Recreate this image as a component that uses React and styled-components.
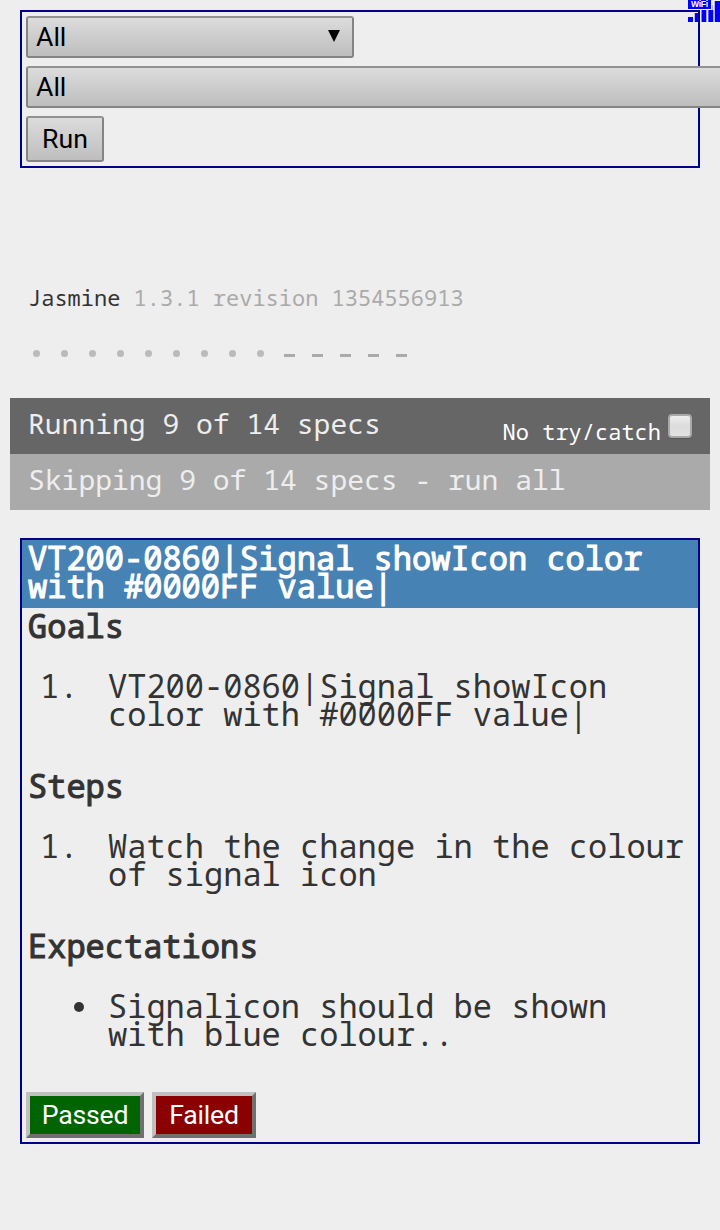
import React from 'react';
import styled, { createGlobalStyle, css } from 'styled-components';

const Global = createGlobalStyle`
  * { box-sizing: border-box; }
  html, body { margin: 0; background: #eee; overflow: hidden; }
  body { min-height: 1230px; color: #333; font-family: "Noto Sans Mono", "DejaVu Sans Mono", monospace; }
`;

const Page = styled.main`
  display: flex;
  flex-direction: column;
  width: 720px;
  height: 1230px;
  padding: 10px;
  overflow: hidden;
`;

const Panel = styled.section`
  display: flex;
  flex-direction: column;
  margin: 0 10px;
  border: 2px solid #00008b;
`;

const FilterPanel = styled(Panel)`
  height: 158px;
  padding: 4px;
  gap: 8px;
  align-items: flex-start;
`;

const grey = css`
  border: 2px solid #848484;
  border-top-color: #929292;
  border-radius: 3px;
  background: linear-gradient(#dcdcdc, #bebebe);
  color: #000;
  font-family: Roboto, sans-serif;
  font-size: 26.67px;
`;

const Select = styled.div`
  ${grey}
  display: flex;
  flex: none;
  align-items: center;
  justify-content: space-between;
  width: ${(p) => p.$width}px;
  height: 42px;
  padding: 0 12px 0 8px;
  line-height: 38px;
`;

const Arrow = styled.svg`
  margin-bottom: 2px;
`;

const RunButton = styled.button`
  ${grey}
  width: 78px;
  height: 46px;
  padding: 0;
  line-height: 42px;
`;

const Version = styled.div`
  margin: 115px 18px 0;
  height: 28px;
  line-height: 28px;
  font-size: 22px;
  color: #aaa;
  white-space: pre;
`;

const Name = styled.span`
  color: #333;
`;

const Symbols = styled.ul`
  display: flex;
  height: 14px;
  margin: 35px 18px 38px;
  padding: 0 0 0 4px;
  list-style: none;
`;

const Symbol = styled.li`
  display: flex;
  width: 28px;
  height: 14px;
  align-items: center;

  &::before {
    content: "";
    width: ${(p) => (p.$skipped ? 11 : 7)}px;
    height: ${(p) => (p.$skipped ? 3 : 7)}px;
    margin: ${(p) => (p.$skipped ? '4px 0 0 0' : '0 0 0 1px')};
    border-radius: ${(p) => (p.$skipped ? 0 : '50%')};
    background: ${(p) => (p.$skipped ? '#aaa' : '#bababa')};
  }
`;

const Bar = styled.div`
  display: flex;
  justify-content: space-between;
  height: 56px;
  padding: 0 18px;
  background: ${(p) => p.$color};
  color: #eee;
  font-size: 28px;
  line-height: 51px;
  white-space: pre;
`;

const Exceptions = styled.label`
  display: flex;
  gap: 7px;
  color: #fff;
  font-size: 22px;
  line-height: 66px;
`;

const Check = styled.span`
  width: 24px;
  height: 24px;
  margin-top: 16px;
  border: 2px solid #a9a9a9;
  border-radius: 4px;
  background: linear-gradient(#eee, #dcdcdc 50%, #e2e2e2);
  box-shadow: 0 1px 1px #555;
`;

const TestPanel = styled(Panel)`
  height: 606px;
  margin-top: 28px;
  font-size: 32px;
  line-height: 28px;
  white-space: pre;
`;

const strong = css`
  margin: 0;
  font-size: inherit;
  font-weight: 400;
  -webkit-text-stroke: 1.1px currentColor;
`;

const Title = styled.h1`
  ${strong}
  height: 68px;
  padding: 4px 6px 8px;
  background: #4682b4;
  color: #fff;
`;

const Sections = styled.div`
  height: 484px;
  padding: 4px 6px 0;
`;

const Section = styled.section`
  height: 160px;
`;

const Heading = styled.h2`
  ${strong}
`;

const Item = styled.div`
  display: grid;
  grid-template-columns: 80px 1fr;
  margin-top: 32px;
`;

const Marker = styled.span`
  padding-left: 12px;
`;

const Dot = styled.span`
  width: 10px;
  height: 10px;
  margin: 10px 0 0 46px;
  border-radius: 50%;
  background: #333;
`;

const Actions = styled.div`
  display: flex;
  gap: 8px;
  padding-left: 4px;
`;

const Verdict = styled.button`
  width: ${(p) => p.$width}px;
  height: 46px;
  padding: 0;
  border: 4px solid;
  border-color: #c0c0c0 #707070 #707070 #c0c0c0;
  background: ${(p) => p.$color};
  color: #fff;
  font-family: Roboto, sans-serif;
  font-size: 26.67px;
  letter-spacing: -0.2px;
  line-height: 38px;
`;

const Signal = styled.svg`
  position: absolute;
  top: 0;
  left: 688px;
`;

const SECTIONS = [
  { title: 'Goals', marker: '1.', text: 'VT200-0860|Signal showIcon\ncolor with #0000FF value|' },
  { title: 'Steps', marker: '1.', text: 'Watch the change in the colour\nof signal icon' },
  { title: 'Expectations', marker: null, text: 'Signalicon should be shown\nwith blue colour..' },
];

function SignalIcon() {
  return (
    <Signal width="32" height="23" viewBox="0 0 32 23">
      <path fill="#b4b4f4" d="M6 13h1v9H6zM13 10h1v12h-1zM20 10h1v12h-1zM24 5h1v5h-1zM26 1h1v21h-1z" />
      <path
        fill="#00f"
        d="M0 17h5v5H0zM7 13h3v9H7zM13.7 10h4.6v12h-4.6zM20.5 10h4.8v12h-4.8zM27 1h5v21h-5zM0 0h23v9H0z"
      />
      <text x="3" y="7.3" fill="#fff" fontFamily="Liberation Sans, sans-serif" fontSize="8.5" fontWeight="700" textLength="17">
        WiFi
      </text>
    </Signal>
  );
}

export default function App() {
  return (
    <>
      <Global />
      <Page>
        <FilterPanel>
          <Select $width={328}>
            All
            <Arrow width="12" height="12" viewBox="0 0 12 12">
              <path d="M0 0h12L6 12z" />
            </Arrow>
          </Select>
          <Select $width={900}>All</Select>
          <RunButton>Run</RunButton>
        </FilterPanel>
        <Version>
          <Name>Jasmine</Name> 1.3.1 revision 1354556913
        </Version>
        <Symbols>
          {Array.from({ length: 14 }, (_, i) => (
            <Symbol key={i} $skipped={i > 8} />
          ))}
        </Symbols>
        <Bar $color="#666">
          Running 9 of 14 specs
          <Exceptions>
            No try/catch
            <Check />
          </Exceptions>
        </Bar>
        <Bar $color="#aaa">Skipping 9 of 14 specs - run all</Bar>
        <TestPanel>
          <Title>{'VT200-0860|Signal showIcon color\nwith #0000FF value|'}</Title>
          <Sections>
            {SECTIONS.map((s) => (
              <Section key={s.title}>
                <Heading>{s.title}</Heading>
                <Item>
                  {s.marker ? <Marker>{s.marker}</Marker> : <Dot />}
                  <span>{s.text}</span>
                </Item>
              </Section>
            ))}
          </Sections>
          <Actions>
            <Verdict $width={118} $color="#006400">Passed</Verdict>
            <Verdict $width={104} $color="#8b0000">Failed</Verdict>
          </Actions>
        </TestPanel>
      </Page>
      <SignalIcon />
    </>
  );
}
